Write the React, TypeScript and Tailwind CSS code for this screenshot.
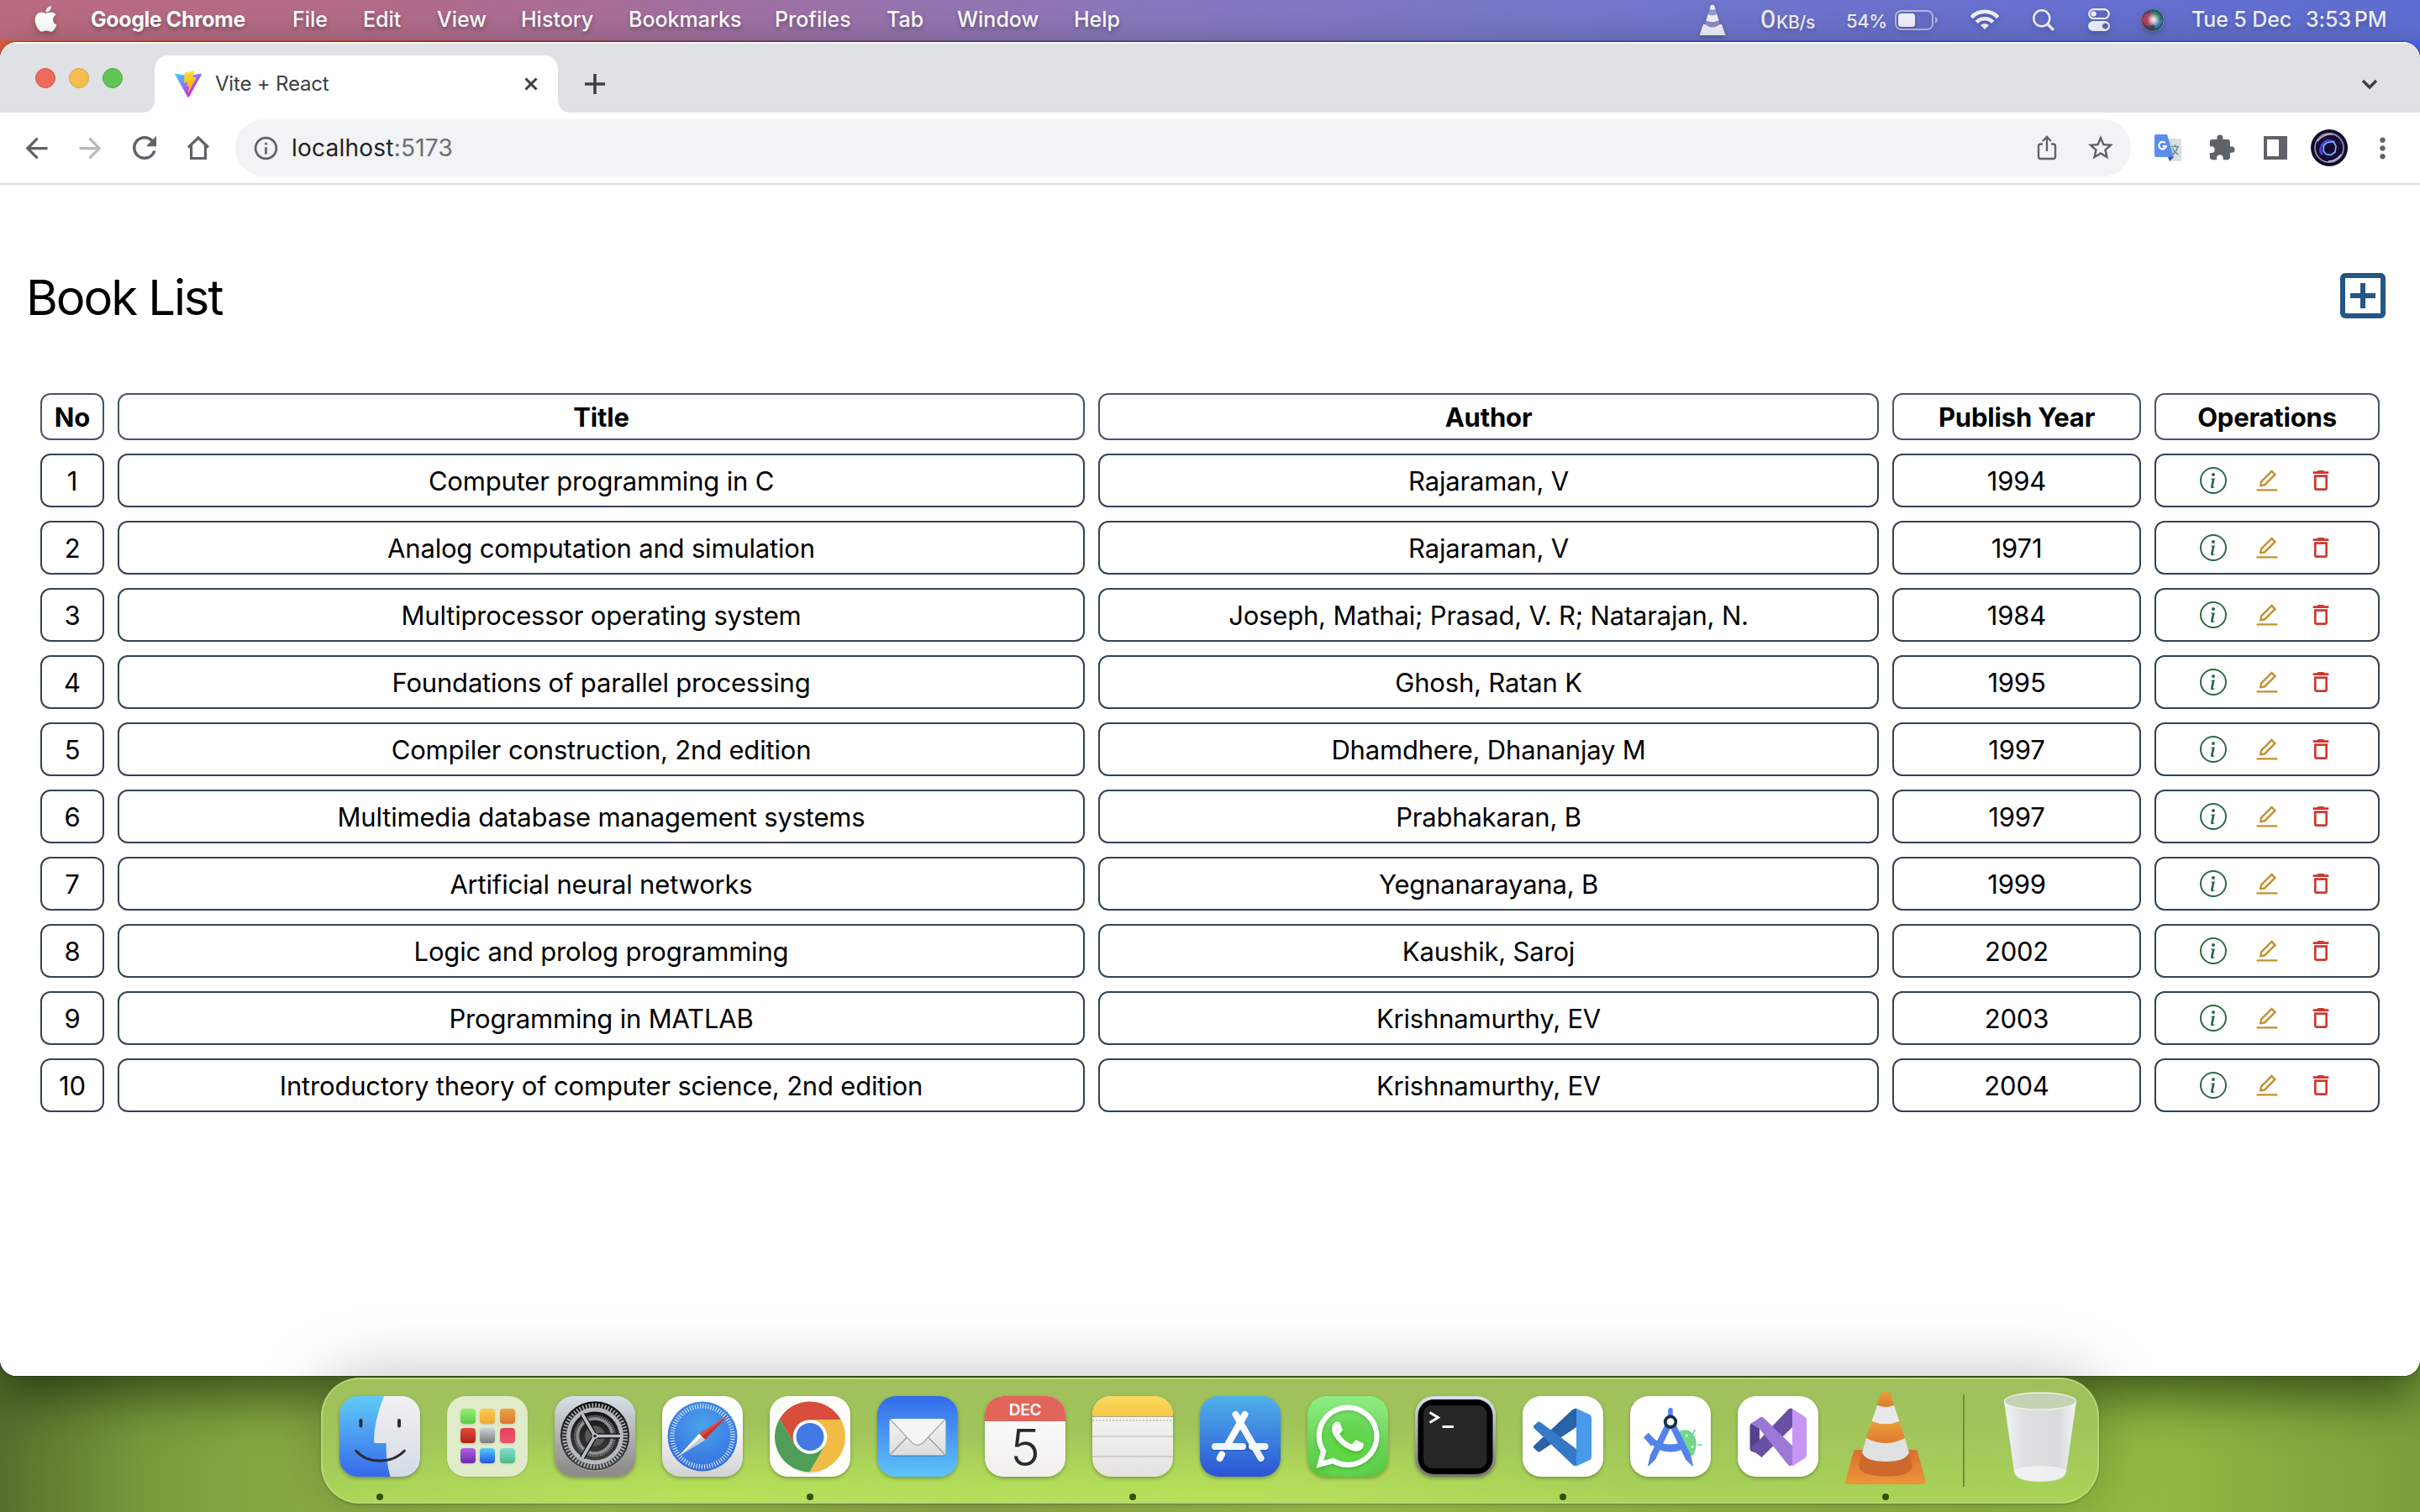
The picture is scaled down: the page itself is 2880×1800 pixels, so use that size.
import React from "react";
import { FaApple, FaWhatsapp } from "react-icons/fa";
import {
  MdArrowBack,
  MdArrowForward,
  MdRefresh,
  MdOutlineInfo,
  MdStarBorder,
  MdExtension,
  MdMoreVert,
  MdOutlineAddBox,
  MdOutlineDelete,
} from "react-icons/md";
import { AiOutlineEdit } from "react-icons/ai";
import { BsInfoCircle } from "react-icons/bs";

const books = [
  ["Computer programming in C", "Rajaraman, V", "1994"],
  ["Analog computation and simulation", "Rajaraman, V", "1971"],
  ["Multiprocessor operating system", "Joseph, Mathai; Prasad, V. R; Natarajan, N.", "1984"],
  ["Foundations of parallel processing", "Ghosh, Ratan K", "1995"],
  ["Compiler construction, 2nd edition", "Dhamdhere, Dhananjay M", "1997"],
  ["Multimedia database management systems", "Prabhakaran, B", "1997"],
  ["Artificial neural networks", "Yegnanarayana, B", "1999"],
  ["Logic and prolog programming", "Kaushik, Saroj", "2002"],
  ["Programming in MATLAB", "Krishnamurthy, EV", "2003"],
  ["Introductory theory of computer science, 2nd edition", "Krishnamurthy, EV", "2004"],
];

/* ---------- menu bar ---------- */

function MenuBar() {
  return (
    <header className="flex h-12 shrink-0 items-center bg-[linear-gradient(97deg,#bc6b7f_0%,#b26c8b_17%,#9d72a8_33%,#8878bf_48%,#7577ca_65%,#6971cf_80%,#5f6ed2_100%)] text-[25px] leading-none font-medium whitespace-nowrap text-white">
      <FaApple size={35} className="ml-[37px] mb-1 w-[35px] drop-shadow-[0_3px_3px_rgba(0,0,0,0.25)]" />
      <nav className="mb-[2px] flex items-center [text-shadow:0_3px_5px_rgba(0,0,0,0.3)]">
        <span className="ml-[36px] w-[240px] font-bold tracking-[-0.017em]">Google Chrome</span>
        <span className="w-[84px]">File</span>
        <span className="w-[88px]">Edit</span>
        <span className="w-[100px]">View</span>
        <span className="w-[128px]">History</span>
        <span className="w-[174px]">Bookmarks</span>
        <span className="w-[133px]">Profiles</span>
        <span className="w-[84px]">Tab</span>
        <span className="w-[139px]">Window</span>
        <span>Help</span>
      </nav>
      <div className="ml-auto flex items-center text-[#f1f1fb] [text-shadow:0_3px_5px_rgba(0,0,0,0.2)]">
        <svg width="32" height="36" viewBox="0 0 32 36" fill="currentColor" className="drop-shadow-[0_3px_3px_rgba(0,0,0,0.25)]">
          <path d="M14 0h4l1.500 5q-3.500 1.500-7 0z" />
          <path d="M12.500 5q3.500 1.500 7 0l2.500 8q-6 2-12 0z" opacity=".35" />
          <path d="M10.600 11q5.500 2.400 10.800 0l2.200 7.500q-7.600 3.500-15.200 0z" />
          <path d="M8.500 18.500q7.500 3.500 15 0l1.500 5.500q-9 6-18 0z" opacity=".3" />
          <path d="M5 23h2q9 7 18 0h2l4.500 13h-31z" />
        </svg>
        <span className="mb-[3px] ml-[41px] w-[19px] text-[29px] font-normal [-webkit-text-stroke:0.4px_currentColor]">0</span>
        <span className="mt-[4px] w-[83px] text-[21px] tracking-[-0.015em]">KB/s</span>
        <span className="mt-[1px] w-[58px] text-[22px] tracking-[-0.02em]">54%</span>
        <svg width="52" height="24" viewBox="0 0 52 24" className="drop-shadow-[0_3px_3px_rgba(0,0,0,0.2)]">
          <rect x="1" y="1" width="44" height="22" rx="6.500" fill="none" stroke="#b4b8e8" strokeWidth="2" />
          <rect x="4" y="4" width="20" height="16" rx="3.500" fill="#f1f1fb" />
          <path d="M48 8q3 1.500 3 4t-3 4z" fill="#b4b8e8" />
        </svg>
        <svg width="34" height="24" viewBox="0 0 34 24" fill="none" stroke="currentColor" strokeWidth="4.600" className="ml-[38px] mb-[2px] drop-shadow-[0_3px_3px_rgba(0,0,0,0.2)]">
          <path d="M1.300 9.600a21.500 21.500 0 0 1 31.400 0" />
          <path d="M7.200 15.400a13.500 13.500 0 0 1 19.600 0" />
          <path d="M17 24l-5-5a7 7 0 0 1 10 0z" fill="currentColor" stroke="none" />
        </svg>
        <svg width="26" height="26" viewBox="0 0 26 26" fill="none" stroke="currentColor" className="ml-[40px] drop-shadow-[0_3px_3px_rgba(0,0,0,0.2)]">
          <circle cx="10.800" cy="10.800" r="9.500" strokeWidth="2.500" />
          <path d="M17.800 17.800l6 6" strokeWidth="3.500" strokeLinecap="round" />
        </svg>
        <svg width="26" height="28" viewBox="0 0 26 28" className="ml-[40px] drop-shadow-[0_3px_3px_rgba(0,0,0,0.2)]">
          <rect x="1.200" y="1.200" width="23.600" height="10.800" rx="5.400" fill="none" stroke="currentColor" strokeWidth="2.200" />
          <circle cx="6.600" cy="6.600" r="3.200" fill="currentColor" />
          <path fillRule="evenodd" fill="currentColor" d="M6 15h14a6 6 0 0 1 0 12H6a6 6 0 0 1 0-12zM20.500 17.500a3.500 3.500 0 1 0 .01 0z" />
        </svg>
        <svg width="28" height="28" viewBox="0 0 28 28" className="ml-[37px] drop-shadow-[0_3px_3px_rgba(0,0,0,0.2)]">
          <defs>
            <radialGradient id="siriCore">
              <stop offset="0" stopColor="#fff" />
              <stop offset=".35" stopColor="#fff" stopOpacity=".7" />
              <stop offset="1" stopColor="#fff" stopOpacity="0" />
            </radialGradient>
            <linearGradient id="siriRim" x1="0" x2="1">
              <stop offset="0" stopColor="#e0455f" />
              <stop offset=".5" stopColor="#4a8f7a" />
              <stop offset="1" stopColor="#3fb6c8" />
            </linearGradient>
          </defs>
          <circle cx="14" cy="14" r="13.300" fill="#3a4560" stroke="url(#siriRim)" />
          <path d="M1.500 14Q4 4 13 5q6 5 5 12Q9 24 4 19z" fill="#d4405e" opacity=".75" />
          <path d="M11 3q10-1 14 9l-7 3z" fill="#2f8f63" opacity=".8" />
          <path d="M14 16l12-3q-1 8-9 11z" fill="#3c8fd0" opacity=".8" />
          <circle cx="15" cy="13.500" r="8" fill="url(#siriCore)" />
        </svg>
        <span className="mb-[2px] ml-[32px] w-[136px] tracking-[-0.005em]">Tue 5 Dec</span>
        <span className="mb-[2px] w-[136px] tracking-[-0.003em] [word-spacing:-0.12em]">3:53 PM</span>
      </div>
    </header>
  );
}

/* ---------- browser chrome ---------- */

function ViteLogo() {
  return (
    <svg width="32" height="32" viewBox="0 0 256 257">
      <defs>
        <linearGradient id="viteA" x1="-.828%" x2="57.636%" y1="7.652%" y2="78.411%">
          <stop offset="0%" stopColor="#41D1FF" />
          <stop offset="100%" stopColor="#BD34FE" />
        </linearGradient>
        <linearGradient id="viteB" x1="43.376%" x2="50.316%" y1="2.242%" y2="89.030%">
          <stop offset="0%" stopColor="#FFEA83" />
          <stop offset="8.333%" stopColor="#FFDD35" />
          <stop offset="100%" stopColor="#FFA800" />
        </linearGradient>
      </defs>
      <path fill="url(#viteA)" d="M255.153 37.938L134.897 252.976c-2.483 4.440-8.862 4.466-11.382.048L.875 37.958c-2.746-4.814 1.371-10.646 6.827-9.670l120.385 21.517a6.537 6.537 0 0 0 2.322-.004l117.867-21.483c5.438-.991 9.574 4.796 6.877 9.620Z" />
      <path fill="url(#viteB)" d="M185.432.063L96.440 17.501a3.268 3.268 0 0 0-2.634 3.014l-5.474 92.456a3.268 3.268 0 0 0 3.997 3.378l24.777-5.718c2.318-.535 4.413 1.507 3.936 3.838l-7.361 36.047c-.495 2.426 1.782 4.500 4.151 3.780l15.304-4.649c2.372-.720 4.652 1.360 4.150 3.788l-11.698 56.621c-.732 3.542 3.979 5.473 5.943 2.437l1.313-2.028l72.516-144.720c1.215-2.423-.880-5.186-3.540-4.672l-25.505 4.922c-2.396.462-4.435-1.770-3.759-4.114l16.646-57.705c.677-2.350-1.370-4.583-3.769-4.113Z" />
    </svg>
  );
}

function TabStrip() {
  return (
    <div className="flex h-[84px] shrink-0 items-end bg-[#dfe1e5] shadow-[inset_0_2px_0_rgba(255,255,255,0.7)]">
      <div className="mb-[29px] ml-[42px] flex gap-4">
        <span className="size-6 rounded-full border border-[#d35548] bg-[#ec6a5e]" />
        <span className="size-6 rounded-full border border-[#d6a243] bg-[#f4bf4f]" />
        <span className="size-6 rounded-full border border-[#51a73e] bg-[#61c554]" />
      </div>
      <svg width="16" height="16" viewBox="0 0 16 16" className="ml-[22px]">
        <path d="M16 0v16H0Q16 16 16 0z" fill="#fff" />
      </svg>
      <div className="flex h-[68px] w-[480px] items-center rounded-t-[16px] bg-white pl-6 text-[#3c4043]">
        <ViteLogo />
        <span className="ml-4 w-[368px] text-[24px] leading-none tracking-[-0.008em]">Vite + React</span>
        <svg width="16" height="16" viewBox="0 0 16 16" stroke="currentColor" strokeWidth="3">
          <path d="M1.500 1.500l13 13M14.500 1.500l-13 13" />
        </svg>
      </div>
      <svg width="16" height="16" viewBox="0 0 16 16">
        <path d="M0 0v16h16Q0 16 0 0z" fill="#fff" />
      </svg>
      <svg width="24" height="24" viewBox="0 0 24 24" stroke="#3c4043" strokeWidth="3.600" className="mb-[22px] ml-4">
        <path d="M12 0v24M0 12h24" />
      </svg>
      <svg width="20" height="14" viewBox="0 0 20 14" fill="none" stroke="#3c4043" strokeWidth="3.400" className="mr-[50px] mb-[26px] ml-auto">
        <path d="M2 2l8 8 8-8" />
      </svg>
    </div>
  );
}

function Toolbar() {
  return (
    <div className="flex h-[86px] shrink-0 items-center border-b-2 border-[#dcdddf] bg-white text-[#5f6368]">
      <MdArrowBack size={39} className="ml-[24px]" />
      <MdArrowForward size={39} className="ml-[25px] text-[#bababa]" />
      <MdRefresh size={42} className="ml-[24px]" />
      <svg width="28" height="30" viewBox="0 0 28 30" fill="none" stroke="currentColor" strokeWidth="3.200" className="ml-[29px]">
        <path d="M2 14.500L14 3l12 11.500M5.600 12v15.500h16.800V12" />
      </svg>
      <div className="ml-[30px] flex h-[68px] w-[2256px] items-center rounded-full bg-[#f1f3f4]">
        <MdOutlineInfo size={33} className="ml-[20px] mt-px" />
        <span className="ml-[14px] text-[28px] leading-none tracking-[0.008em] text-[#202124]">
          localhost<span className="text-[#6a6e72]">:5173</span>
        </span>
        <svg width="24" height="30" viewBox="0 0 24 30" fill="none" stroke="currentColor" strokeWidth="2.400" className="mr-[34px] ml-auto">
          <path d="M7 10.500H4.500a2.500 2.500 0 0 0-2.500 2.500v12.500A2.500 2.500 0 0 0 4.500 28h15a2.500 2.500 0 0 0 2.500-2.500V13a2.500 2.500 0 0 0-2.500-2.500H17M12 19V3M7 7l5-5 5 5" />
        </svg>
        <MdStarBorder size={36} className="mr-[18px]" />
      </div>
      <svg width="32" height="32" viewBox="0 0 32 32" className="ml-[28px]">
        <path d="M14 5h16a2 2 0 0 1 2 2v23a2 2 0 0 1-2 2H18z" fill="#dcdee0" />
        <path d="M2 0h13l8 27H2a2 2 0 0 1-2-2V2a2 2 0 0 1 2-2z" fill="#5a8dee" />
        <path d="M16 27h7l-5 5z" fill="#3550b5" />
        <path d="M12.800 10.200a4.300 4.300 0 1 0 1 3.800H9.800" fill="none" stroke="#fff" strokeWidth="2.200" />
        <path d="M20 14.500h9M24.500 12v2.500M27.500 15q-1.500 6-6 9M21.500 16.500q2.500 5.500 7 7.500" fill="none" stroke="#6b8f99" strokeWidth="1.600" />
      </svg>
      <MdExtension size={34} className="ml-[31px]" />
      <svg width="28" height="28" viewBox="0 0 28 28" className="ml-[33px]">
        <path fillRule="evenodd" fill="currentColor" d="M0 0h28v28H0zM4 4v20h14V4z" />
      </svg>
      <svg width="44" height="44" viewBox="0 0 44 44" className="ml-[28px]">
        <circle cx="22" cy="22" r="22" fill="#120a2c" />
        <circle cx="22" cy="22" r="17" fill="#150d33" stroke="#8f8aa8" strokeWidth="1.800" />
        <path d="M8 14q8-9 18-8M36 30q-6 8-15 8" fill="none" stroke="#c9c6da" strokeWidth="1.300" />
        <path d="M27 15q-8-4-13 3t0 12" fill="none" stroke="#4b43d8" strokeWidth="3" />
        <path d="M27 14.500l3 5.500-1 7-5 3.500-6-1-3-4 .5-6 3.500-3.500z" fill="none" stroke="#7fb4ff" strokeWidth="1.700" />
      </svg>
      <MdMoreVert size={39} className="ml-[22px]" />
    </div>
  );
}

/* ---------- page ---------- */

const th = "h-14 rounded-xl border-2 border-[#475569] pt-[3px]";
const td = "h-16 rounded-xl border-2 border-[#334155] text-center";

function BookPage() {
  return (
    <main className="flex-1 bg-white p-8 text-black">
      <div className="flex items-center justify-between">
        <h1 className="mt-[66px] mb-[62px] -ml-px text-[58px] leading-[72px] tracking-[-0.036em]">Book List</h1>
        <MdOutlineAddBox size={72} className="text-[#245785]" />
      </div>
      <div className="grid grid-cols-[76px_1151px_929px_296px_268px] gap-4 p-4 text-[31px] leading-[48px] tracking-[-0.006em]">
        {["No", "Title", "Author", "Publish Year", "Operations"].map((h) => (
          <div key={h} className={th + " text-center font-bold"}>
            {h}
          </div>
        ))}
        {books.map(([title, author, year], i) => (
          <React.Fragment key={title}>
            <div className={td + " pt-[7px]"}>{i + 1}</div>
            <div className={td + " pt-[7px]"}>{title}</div>
            <div className={td + " pt-[7px]"}>{author}</div>
            <div className={td + " pt-[7px]"}>{year}</div>
            <div className={td + " flex items-center justify-center gap-8"}>
              <BsInfoCircle size={32} className="text-[#2c6a41]" />
              <AiOutlineEdit size={32} className="text-[#c58e2c]" />
              <MdOutlineDelete size={32} className="text-[#cd3a30]" />
            </div>
          </React.Fragment>
        ))}
      </div>
    </main>
  );
}

/* ---------- dock ---------- */

const tile = "size-24 overflow-hidden rounded-[22px] shadow-[0_2px_4px_rgba(0,0,0,0.3)]";

function Finder() {
  return (
    <svg viewBox="0 0 96 96" className={tile}>
      <defs>
        <linearGradient id="finderBlue" x2="0" y2="1">
          <stop offset="0" stopColor="#60cbf9" />
          <stop offset="1" stopColor="#3669ea" />
        </linearGradient>
        <linearGradient id="finderGrey" x2="0" y2="1">
          <stop offset="0" stopColor="#f2f1f2" />
          <stop offset="1" stopColor="#d3dbe8" />
        </linearGradient>
      </defs>
      <path d="M0 0h96v96H0z" fill="url(#finderBlue)" />
      <path d="M53 0Q41 30 41 53q0 3.500 3 3.500h11.500Q55 76 60.500 96H96V0z" fill="url(#finderGrey)" />
      <path d="M42 56.500h13.500" stroke="#000" strokeOpacity=".25" strokeWidth="1.200" />
      <g fill="none" stroke="#2b2b2f" strokeLinecap="round">
        <path d="M25.400 29v6.500M71 29v6.500" strokeWidth="4" />
        <path d="M19.500 65Q30 77 48 77t29.500-12" strokeWidth="2.800" />
      </g>
    </svg>
  );
}

function Launchpad() {
  return (
    <div className="grid size-24 grid-cols-[18px_18px_18px] content-center justify-center gap-[5.500px] rounded-[22px] bg-[#e0ebca] pb-[2px] shadow-[0_1px_2px_rgba(0,0,0,0.15)]">
      <i className="h-[18px] w-[18px] rounded-[4px] bg-linear-to-b from-[#8ff26e] to-[#5bcb45] shadow-sm" />
      <i className="h-[18px] w-[18px] rounded-[4px] bg-linear-to-b from-[#f7cf4c] to-[#efa73a] shadow-sm" />
      <i className="h-[18px] w-[18px] rounded-[4px] bg-linear-to-b from-[#eda33a] to-[#de7438] shadow-sm" />
      <i className="h-[18px] w-[18px] rounded-[4px] bg-linear-to-b from-[#e64a3c] to-[#ac2318] shadow-sm" />
      <i className="h-[18px] w-[18px] rounded-[4px] bg-linear-to-b from-[#cbd2d8] to-[#7b7b7b] shadow-sm" />
      <i className="h-[18px] w-[18px] rounded-[4px] bg-linear-to-b from-[#ea4359] to-[#e8566a] shadow-sm" />
      <i className="h-[18px] w-[18px] rounded-[4px] bg-linear-to-b from-[#b25fe6] to-[#6a2ba6] shadow-sm" />
      <i className="h-[18px] w-[18px] rounded-[4px] bg-linear-to-b from-[#58ccfa] to-[#2c50e4] shadow-sm" />
      <i className="h-[18px] w-[18px] rounded-[4px] bg-linear-to-b from-[#7edfd4] to-[#51b983] shadow-sm" />
    </div>
  );
}

function Settings() {
  return (
    <svg viewBox="0 0 96 96" className={tile}>
      <defs>
        <linearGradient id="setBg" x2="0" y2="1">
          <stop offset="0" stopColor="#d5e0e8" />
          <stop offset=".9" stopColor="#8f8d8a" />
        </linearGradient>
        <linearGradient id="setDark" x2="0" y2="1">
          <stop offset="0" stopColor="#0c0c0e" />
          <stop offset="1" stopColor="#4a4846" />
        </linearGradient>
      </defs>
      <path d="M0 0h96v96H0z" fill="url(#setBg)" />
      <circle cx="48" cy="47.500" r="41.500" fill="url(#setDark)" stroke="#dfe3e6" strokeOpacity=".5" strokeWidth="1" />
      <g fill="none">
        <circle cx="48" cy="47.500" r="36.500" stroke="#b5bbbf" strokeWidth="5" strokeDasharray="1.700 2.122" />
        <circle cx="48" cy="47.500" r="31.500" stroke="#b4babe" strokeWidth="5" />
        <circle cx="48" cy="47.500" r="23" stroke="#85898b" strokeWidth="4" strokeDasharray="1.200 1.208" />
        <circle cx="48" cy="47.500" r="20.500" stroke="#8d9193" strokeWidth="3.500" />
        <circle cx="48" cy="47.500" r="12" fill="#5b5b5a" stroke="#4b4b4b" />
        <path d="M48 47.500h30M48 47.500l-15-26M48 47.500l-15 26" stroke="#16181a" strokeWidth="6.500" />
        <path d="M48 47.500h30M48 47.500l-15-26M48 47.500l-15 26" stroke="#b9bfc3" strokeWidth="3.600" />
      </g>
      <circle cx="48" cy="47.500" r="3.600" fill="#b9bfc3" />
      <circle cx="48" cy="47.500" r="1.800" fill="#222" />
    </svg>
  );
}

function Safari() {
  return (
    <svg viewBox="0 0 96 96" className={tile}>
      <defs>
        <linearGradient id="safBg" x2="0" y2="1">
          <stop offset="0.300" stopColor="#fff" />
          <stop offset="1" stopColor="#d2d2d2" />
        </linearGradient>
        <radialGradient id="safBlue" cx=".5" cy=".35" r=".65">
          <stop offset="0" stopColor="#4ba3ec" />
          <stop offset="1" stopColor="#366fdd" />
        </radialGradient>
      </defs>
      <path d="M0 0h96v96H0z" fill="url(#safBg)" />
      <circle cx="48" cy="48" r="41.500" fill="url(#safBlue)" />
      <circle cx="48" cy="48" r="36" fill="none" stroke="#d8e8fa" strokeWidth="5.500" strokeDasharray="1.100 2.042" />
      <path d="M78 23.300L44 44.700l7 7.300z" fill="#e4483c" />
      <path d="M78 23.300L47.500 48.300l3.500 3.700z" fill="#c0352b" />
      <path d="M19.700 71.500L44 44.700l7 7.300z" fill="#fff" />
      <path d="M19.700 71.500l27.800-23.200L51 52z" fill="#c9ccd0" />
    </svg>
  );
}

function Chrome() {
  return (
    <svg viewBox="0 0 96 96" className={tile}>
      <path d="M0 0h96v96H0z" fill="#fcfdf8" />
      <ellipse cx="48" cy="54" rx="37" ry="39" fill="#000" opacity=".07" />
      <g transform="translate(48 48.500)">
        <path d="M-36.100-21.500A42 42 0 0 1 36.700-20.500H0L-17.750 10.250z" fill="#d84d3c" />
        <path d="M36.700-20.500A42 42 0 0 1-.6 42L17.750 10.250 0-20.500z" fill="#f1bc46" />
        <path d="M-.6 42A42 42 0 0 1-36.100-21.500L-17.750 10.250 17.750 10.250z" fill="#4f9d56" />
        <circle r="20.300" fill="#fff" />
        <circle r="16.500" fill="#4379e4" />
      </g>
    </svg>
  );
}

function Mail() {
  return (
    <svg viewBox="0 0 96 96" className={tile}>
      <defs>
        <linearGradient id="mailBg" x2="0" y2="1">
          <stop offset="0" stopColor="#346ceb" />
          <stop offset="1" stopColor="#5ec4f9" />
        </linearGradient>
        <linearGradient id="mailEnv" x2="0" y2="1">
          <stop offset="0" stopColor="#f4f4f4" />
          <stop offset="1" stopColor="#dcdcdc" />
        </linearGradient>
      </defs>
      <path d="M0 0h96v96H0z" fill="url(#mailBg)" />
      <rect x="14.500" y="28.500" width="67" height="43.500" rx="4" fill="#000" opacity=".2" />
      <rect x="14.500" y="27" width="67" height="43.500" rx="3.500" fill="url(#mailEnv)" />
      <path d="M16 69l19-19.500M80 69L61 49.500" stroke="#9a9a9a" strokeWidth="1.200" />
      <path d="M15.500 28l26 27.500q6.500 6 13 0l26-27.500" fill="#f5f5f5" stroke="#a8a8a8" strokeWidth="1.300" />
    </svg>
  );
}

function Calendar() {
  return (
    <div className="flex size-24 flex-col items-center rounded-[22px] bg-linear-to-b from-white to-[#f0efee] shadow-[0_2px_4px_rgba(0,0,0,0.3)]">
      <div className="flex h-[30px] w-full items-center justify-center rounded-t-[22px] bg-[#e2655a] pt-[3px] text-[19px] leading-none font-semibold tracking-[-0.01em] text-white">DEC</div>
      <div className="text-[60px] leading-[62px] font-light text-[#2a2a2a]">5</div>
    </div>
  );
}

function Notes() {
  return (
    <div className={tile + " flex flex-col bg-linear-to-b from-[#f8f8f7] to-[#e4e3df]"}>
      <div className="h-[25px] border-b border-[#a9a59a] bg-linear-to-b from-[#fbd95e] to-[#f6c843]" />
      <div className="mt-[3px] h-[2px] bg-[repeating-linear-gradient(90deg,#c3c3c3_0_2px,transparent_2px_4px)]" />
      <div className="mt-[17px] h-[2px] bg-[#d3d3d2]" />
      <div className="mt-[22px] h-[2px] bg-[#cfcfcd]" />
    </div>
  );
}

function AppStore() {
  return (
    <svg viewBox="0 0 96 96" className={tile}>
      <defs>
        <linearGradient id="storeBg" x2="0" y2="1">
          <stop offset="0" stopColor="#50b0ea" />
          <stop offset="1" stopColor="#2b55d3" />
        </linearGradient>
      </defs>
      <path d="M0 0h96v96H0z" fill="url(#storeBg)" />
      <g fill="none" strokeLinecap="round" strokeWidth="8">
        <path d="M18 61.500h59.500M42.500 23.500L72.500 75.500M26 70.500l-2.500 4.500M53.500 23.500L33.500 58" stroke="#1d3e9f" strokeOpacity=".35" />
        <path d="M18 60h33M62 60h15.500" stroke="#eef5fd" />
        <path d="M42.500 22L72.500 74" stroke="#f4f8fe" />
        <path d="M53.500 22L33.500 57M26 69.500l-2.300 4.500" stroke="#fff" />
      </g>
    </svg>
  );
}

function WhatsApp() {
  return (
    <div className={tile + " flex items-center justify-center bg-[radial-gradient(circle_at_50%_65%,#5ed637_0%,#62d651_35%,transparent_60%),linear-gradient(180deg,#8eed83,#57c33c)]"}>
      <FaWhatsapp size={86} className="text-[#fafdf9] drop-shadow-[0_2px_2px_rgba(0,80,0,0.25)]" />
    </div>
  );
}

function Terminal() {
  return (
    <svg viewBox="0 0 96 96" className={tile}>
      <defs>
        <linearGradient id="termRim" x2="0" y2="1">
          <stop offset="0" stopColor="#d3e2ea" />
          <stop offset="1" stopColor="#77736f" />
        </linearGradient>
      </defs>
      <path d="M0 0h96v96H0z" fill="url(#termRim)" />
      <rect x="3.500" y="4" width="89" height="89" rx="19" fill="#000" />
      <rect x="10" y="11" width="75.500" height="75" rx="10" fill="#262626" />
      <path d="M17.500 19.500l10 6-10 6" fill="none" stroke="#fff" strokeWidth="3" />
      <path d="M32.500 36.500H46" stroke="#fff" strokeWidth="3" />
    </svg>
  );
}

function VSCode() {
  return (
    <svg viewBox="0 0 96 96" className={tile}>
      <path d="M0 0h96v96H0z" fill="#fff" />
      <path d="M13.500 59L59 16.500q2-2 5-1.800V37L21 66q-1.500 1-3 0l-4.500-4q-1.500-1.500 0-3z" fill="#2a62a8" />
      <path d="M13.500 35l4.500-4q1.500-1 3 0l43 32v20q-3 .3-5-1.800L13.500 38q-1.500-1.500 0-3z" fill="#3478c8" />
      <path d="M64 14.700L80 22q2 1 2 4v46q0 3-2 4l-16 7.500z" fill="#4a98e8" />
    </svg>
  );
}

function AndroidStudio() {
  return (
    <svg viewBox="0 0 96 96" className={tile}>
      <path d="M0 0h96v96H0z" fill="#fff" />
      <path d="M58 42q10-5 17 3.500T76 69q-2 2-4 2.500z" fill="#70d78b" />
      <path d="M74 46l3.500-6M80 58h6" stroke="#70d78b" strokeWidth="1.600" />
      <circle cx="67.500" cy="47" r="1.500" fill="#fff" />
      <circle cx="74" cy="60.500" r="1.500" fill="#fff" />
      <path d="M16 49l6-5.500q10 14 26 14 8 0 13-3l3 8q-7 4-16 4-13 0-21-8l-2 1z" fill="#5383ec" />
      <path d="M41.500 34L24 70l-3 13 1 .5 8-8L48 38l18 37.500 8 8 1-.5-3-13-17.500-36z" fill="#5383ec" />
      <path d="M48 14q2.800 0 2.800 3v8h-5.600v-8q0-3 2.800-3z" fill="#5383ec" />
      <circle cx="48" cy="30.700" r="6.300" fill="#fff" stroke="#17303f" strokeWidth="3.800" />
    </svg>
  );
}

function VisualStudio() {
  return (
    <svg viewBox="0 0 96 96" className={tile}>
      <path d="M0 0h96v96H0z" fill="#fff" />
      <path d="M14.500 36q0-2 1.500-3.500L26 27v42L16 65.500q-1.500-1-1.500-3z" fill="#56418a" />
      <path d="M14.500 62L26 52 60 16q2-2.500 5-1v22L28.500 73z" fill="#6a50a4" />
      <path d="M16 33l11-8q2-1 4 1l34 33v23q-3 2-5 0L26 39z" fill="#9b78d6" />
      <path d="M65 15l15 9.500q2 1.500 2 4V70q0 2.500-2 4l-15 9.500z" fill="#c597f3" />
    </svg>
  );
}

function Vlc() {
  return (
    <svg width="96" height="110" viewBox="0 0 96 110" className="-mt-[5px]">
      <defs>
        <linearGradient id="vlcBase" x2="0" y2="1">
          <stop offset="0" stopColor="#d96f31" />
          <stop offset="1" stopColor="#ec9638" />
        </linearGradient>
        <linearGradient id="vlcOrange" x2="0" y2="1">
          <stop offset="0" stopColor="#ec9d3a" />
          <stop offset="1" stopColor="#de7a30" />
        </linearGradient>
      </defs>
      <path d="M12.500 69h71q2 0 2.500 2l10 36q0 3-2 3H2q-2 0-2-3l10-36q.5-2 2.500-2z" fill="url(#vlcBase)" />
      <path d="M20 73l-4 14q0 13 32 13.500T80 87l-4-14z" fill="#ce682e" />
      <path d="M42.500 1.500q5.500-3 11 0L58 16q-10 4-20 0z" fill="url(#vlcOrange)" />
      <path d="M38 16q10 4 20 0l6.500 19q-16.500 7-33 0z" fill="#e7e8e9" />
      <path d="M31.500 35q16.500 7 33 0L71 55q-23 12-46 0z" fill="url(#vlcOrange)" />
      <path d="M25 55q23 12 46 0l5 17.500Q71 83 48 83T20 72.500z" fill="#dfe1e2" />
    </svg>
  );
}

function Trash() {
  return (
    <svg width="96" height="110" viewBox="0 0 96 110" className="-mt-[5px]">
      <defs>
        <linearGradient id="binBody" x1="0" x2="1">
          <stop offset="0" stopColor="#f3f4f5" />
          <stop offset=".25" stopColor="#dfe0e1" />
          <stop offset=".75" stopColor="#d9dadc" />
          <stop offset="1" stopColor="#f4f4f4" />
        </linearGradient>
      </defs>
      <path d="M5 11l12 84q1.500 12 31 12t31-12L91 11z" fill="url(#binBody)" />
      <path d="M17 94q2 12.500 31 12.500T79 94q-8-6-31-6t-31 6z" fill="#fff" opacity=".55" />
      <ellipse cx="48" cy="11" rx="42.500" ry="10" fill="#c5d2b3" stroke="#eef1ea" strokeWidth="1.400" />
    </svg>
  );
}

const apps: { icon: () => React.JSX.Element; running?: boolean }[] = [
  { icon: Finder, running: true },
  { icon: Launchpad },
  { icon: Settings },
  { icon: Safari },
  { icon: Chrome, running: true },
  { icon: Mail },
  { icon: Calendar },
  { icon: Notes, running: true },
  { icon: AppStore },
  { icon: WhatsApp },
  { icon: Terminal },
  { icon: VSCode, running: true },
  { icon: AndroidStudio },
  { icon: VisualStudio },
  { icon: Vlc, running: true },
];

function Dock() {
  return (
    <footer className="relative z-20 mt-[2px] ml-[382px] flex h-[150px] w-[2116px] shrink-0 rounded-[46px] border-2 border-[#c0de80]/70 bg-[radial-gradient(ellipse_500px_90px_at_22%_100%,rgba(190,232,90,0.7),transparent),radial-gradient(ellipse_500px_90px_at_50%_100%,rgba(190,232,90,0.7),transparent),linear-gradient(180deg,#9fbf5b_0%,#a2c65a_50%,#a9d558_100%)] pt-5 pl-5 shadow-[0_0_80px_rgba(0,0,0,0.26),0_1px_3px_rgba(0,0,0,0.25)]">
      <div className="flex gap-8">
        {apps.map(({ icon: Icon, running }, i) => (
          <div key={i} className="flex w-24 flex-col items-center">
            <div className="h-24 w-24">
              <Icon />
            </div>
            {running && <span className="mt-5 size-2 rounded-full bg-[#2c5200]" />}
          </div>
        ))}
      </div>
      <div className="-mt-[2px] ml-[44px] h-[110px] w-[2px] bg-[#6a9431]" />
      <div className="ml-[42px] h-24 w-24">
        <Trash />
      </div>
    </footer>
  );
}

export default function App() {
  return (
    <div className="flex h-[1800px] w-[2880px] flex-col overflow-hidden bg-[linear-gradient(90deg,#e2603c_0%,#c0453a_18%,#6b5a9c_40%,#4a62dd_75%,#4f66ee_100%),linear-gradient(90deg,#566f2c_0%,#789a3b_6%,#8cae45_13%,#9fc24c_25%,#93ad47_40%,#a5c84e_55%,#98b946_75%,#93bc43_88%,#7a9f3b_100%)] bg-[length:100%_90px,100%_100%] bg-no-repeat font-[Inter,'Liberation_Sans',sans-serif]">
      <MenuBar />
      <section className="relative z-10 mt-[2px] flex h-[1588px] shrink-0 flex-col overflow-hidden rounded-[20px] bg-white shadow-[0_0_2px_rgba(0,0,0,0.8),0_24px_60px_rgba(10,25,0,0.62)]">
        <TabStrip />
        <Toolbar />
        <BookPage />
      </section>
      <Dock />
    </div>
  );
}
